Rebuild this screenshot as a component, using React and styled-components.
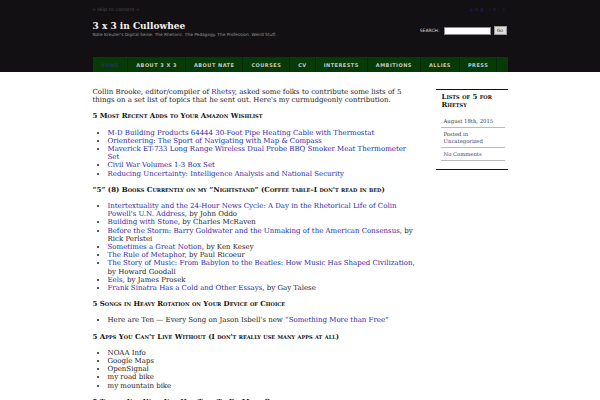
import React from "react";
import styled, { createGlobalStyle } from "styled-components";

const Global = createGlobalStyle`
  html, body { margin: 0; padding: 0; background: #fff; }
  body { font-family: "DejaVu Serif", serif; color: #222; }
  * { box-sizing: border-box; }
  a { text-decoration: none; }
`;

const Header = styled.header`
  background: #121012;
`;

const Inner = styled.div`
  width: 415px;
  margin: 0 auto;
`;

const TopBar = styled.div`
  display: flex;
  justify-content: space-between;
  align-items: center;
  height: 16px;
  padding-top: 2px;
  font-family: "DejaVu Sans", sans-serif;
`;

const Skip = styled.a`
  font-size: 5px;
  color: #4a4a4a;
`;

const LogIn = styled.a`
  font-size: 5px;
  letter-spacing: 2.2px;
  color: #1c2a66;
`;

const Masthead = styled.div`
  display: flex;
  justify-content: space-between;
  align-items: flex-start;
  height: 41px;
  padding-top: 5px;
`;

const Branding = styled.div`
  display: flex;
  flex-direction: column;
`;

const Title = styled.h1`
  margin: 0;
  font-family: "DejaVu Serif", serif;
  font-weight: bold;
  font-size: 9px;
  line-height: 11px;
  color: #f2f2f2;
`;

const Tagline = styled.div`
  font-family: "DejaVu Sans", sans-serif;
  font-size: 4.3px;
  line-height: 6px;
  color: #9a9a9a;
`;

const Search = styled.form`
  display: flex;
  align-items: center;
  gap: 3px;
  margin-top: 5px;
  margin-right: 1px;
`;

const SearchLabel = styled.label`
  font-family: "DejaVu Sans", sans-serif;
  font-size: 4.5px;
  color: #ddd;
  margin-right: 1px;
`;

const SearchInput = styled.input`
  width: 47px;
  height: 8px;
  padding: 0;
  border: 1px solid #888;
  background: #fff;
`;

const GoButton = styled.button`
  width: 13px;
  height: 9px;
  padding: 0;
  border: 1px solid #999;
  background: #ddd;
  font-family: "DejaVu Sans", sans-serif;
  font-size: 4.5px;
  color: #333;
  line-height: 7px;
`;

const Nav = styled.nav`
  display: flex;
  height: 15px;
  background: #063a06;
`;

const NavItem = styled.a`
  display: flex;
  align-items: center;
  padding: 0 8px;
  border-right: 1px solid #042a04;
  font-family: "DejaVu Sans", sans-serif;
  font-weight: bold;
  font-size: 5px;
  letter-spacing: 0.48px;
  color: ${(p) => (p.$active ? "#1a3566" : "#c8c8c8")};
`;

const Page = styled.div`
  display: flex;
  gap: 20px;
  padding-top: 16px;
`;

const Main = styled.main`
  flex: 1;
  font-size: 7px;
  line-height: 8.2px;
`;

const P = styled.p`
  margin: 0 0 8px;
`;

const H = styled.h3`
  margin: 0 0 8px;
  font-size: 7px;
  line-height: 8.2px;
  font-weight: bold;
  font-variant: small-caps;
  color: #111;
`;

const List = styled.ul`
  margin: 0 0 8px;
  padding-left: 15px;
  list-style: disc;
`;

const Item = styled.li``;

const Link = styled.a`
  color: #2a2aa6;
`;

const Sidebar = styled.aside`
  width: 72px;
  flex: none;
  border-top: 1.5px solid #111;
  border-bottom: 1.5px solid #111;
  padding: 3px 0 8px;
  align-self: flex-start;
  margin-top: 1px;
`;

const SideTitle = styled.h2`
  margin: 0 0 6px;
  padding-left: 6px;
  font-size: 7px;
  line-height: 8px;
  font-weight: bold;
  font-variant: small-caps;
  color: #111;
`;

const Meta = styled.ul`
  margin: 0 3px 0 5px;
  padding: 0;
  list-style: none;
`;

const MetaItem = styled.li`
  padding: 2.5px 3px;
  border-bottom: 1px solid #bbb;
  font-size: 5.3px;
  line-height: 7px;
  color: #333;
`;

const MetaLink = styled.a`
  color: #2d4080;
`;

const navItems = ["HOME", "ABOUT 3 X 3", "ABOUT NATE", "COURSES", "CV", "INTERESTS", "AMBITIONS", "ALLIES", "PRESS"];

export default function App() {
  return (
    <>
      <Global />
      <Header>
        <Inner>
          <TopBar>
            <Skip href="#">« skip to content »</Skip>
            <LogIn href="#">Log in »</LogIn>
          </TopBar>
          <Masthead>
            <Branding>
              <Title>3 x 3 in Cullowhee</Title>
              <Tagline>Nate Kreuter's Digital Seine. The Rhetoric. The Pedagogy. The Profession. Weird Stuff.</Tagline>
            </Branding>
            <Search onSubmit={(e) => e.preventDefault()}>
              <SearchLabel>SEARCH:</SearchLabel>
              <SearchInput type="text" />
              <GoButton type="submit">Go</GoButton>
            </Search>
          </Masthead>
          <Nav>
            {navItems.map((n, i) => (
              <NavItem key={n} href="#" $active={i === 0}>{n}</NavItem>
            ))}
          </Nav>
        </Inner>
      </Header>
      <Inner>
        <Page>
          <Main>
            <P>
              Collin Brooke, editor/compiler of <Link href="#">Rhetsy</Link>, asked some folks to contribute some lists of 5 things on a set list of topics that he sent out. Here's my curmudgeonly contribution.
            </P>
            <H>5 Most Recent Adds to Your Amazon Wishlist</H>
            <List>
              <Item><Link href="#">M-D Building Products 64444 30-Foot Pipe Heating Cable with Thermostat</Link></Item>
              <Item><Link href="#">Orienteering: The Sport of Navigating with Map &amp; Compass</Link></Item>
              <Item><Link href="#">Maverick ET-733 Long Range Wireless Dual Probe BBQ Smoker Meat Thermometer Set</Link></Item>
              <Item><Link href="#">Civil War Volumes 1-3 Box Set</Link></Item>
              <Item><Link href="#">Reducing Uncertainty: Intelligence Analysis and National Security</Link></Item>
            </List>
            <H>“5” (8) Books Currently on my “Nightstand” (Coffee table–I don't read in bed)</H>
            <List>
              <Item><Link href="#">Intertextuality and the 24-Hour News Cycle: A Day in the Rhetorical Life of Colin Powell's U.N. Address</Link>, by John Oddo</Item>
              <Item><Link href="#">Building with Stone</Link>, by Charles McRaven</Item>
              <Item><Link href="#">Before the Storm: Barry Goldwater and the Unmaking of the American Consensus</Link>, by Rick Perlstei</Item>
              <Item><Link href="#">Sometimes a Great Notion</Link>, by Ken Kesey</Item>
              <Item><Link href="#">The Rule of Metaphor</Link>, by Paul Ricoeur</Item>
              <Item><Link href="#">The Story of Music: From Babylon to the Beatles: How Music Has Shaped Civilization</Link>, by Howard Goodall</Item>
              <Item><Link href="#">Eels</Link>, by James Prosek</Item>
              <Item><Link href="#">Frank Sinatra Has a Cold and Other Essays</Link>, by Gay Talese</Item>
            </List>
            <H>5 Songs in Heavy Rotation on Your Device of Choice</H>
            <List>
              <Item>Here are Ten — Every Song on Jason Isbell's new <Link href="#">“Something More than Free”</Link></Item>
            </List>
            <H>5 Apps You Can't Live Without (I don't really use many apps at all)</H>
            <List>
              <Item>NOAA Info</Item>
              <Item>Google Maps</Item>
              <Item>OpenSignal</Item>
              <Item>my road bike</Item>
              <Item>my mountain bike</Item>
            </List>
            <H>5 Things You Wish You Had Time To Do More Often</H>
          </Main>
          <Sidebar>
            <SideTitle>Lists of 5 for Rhetsy</SideTitle>
            <Meta>
              <MetaItem>August 18th, 2015</MetaItem>
              <MetaItem>Posted in<br /><MetaLink href="#">Uncategorized</MetaLink></MetaItem>
              <MetaItem><MetaLink href="#">No Comments</MetaLink></MetaItem>
            </Meta>
          </Sidebar>
        </Page>
      </Inner>
    </>
  );
}
